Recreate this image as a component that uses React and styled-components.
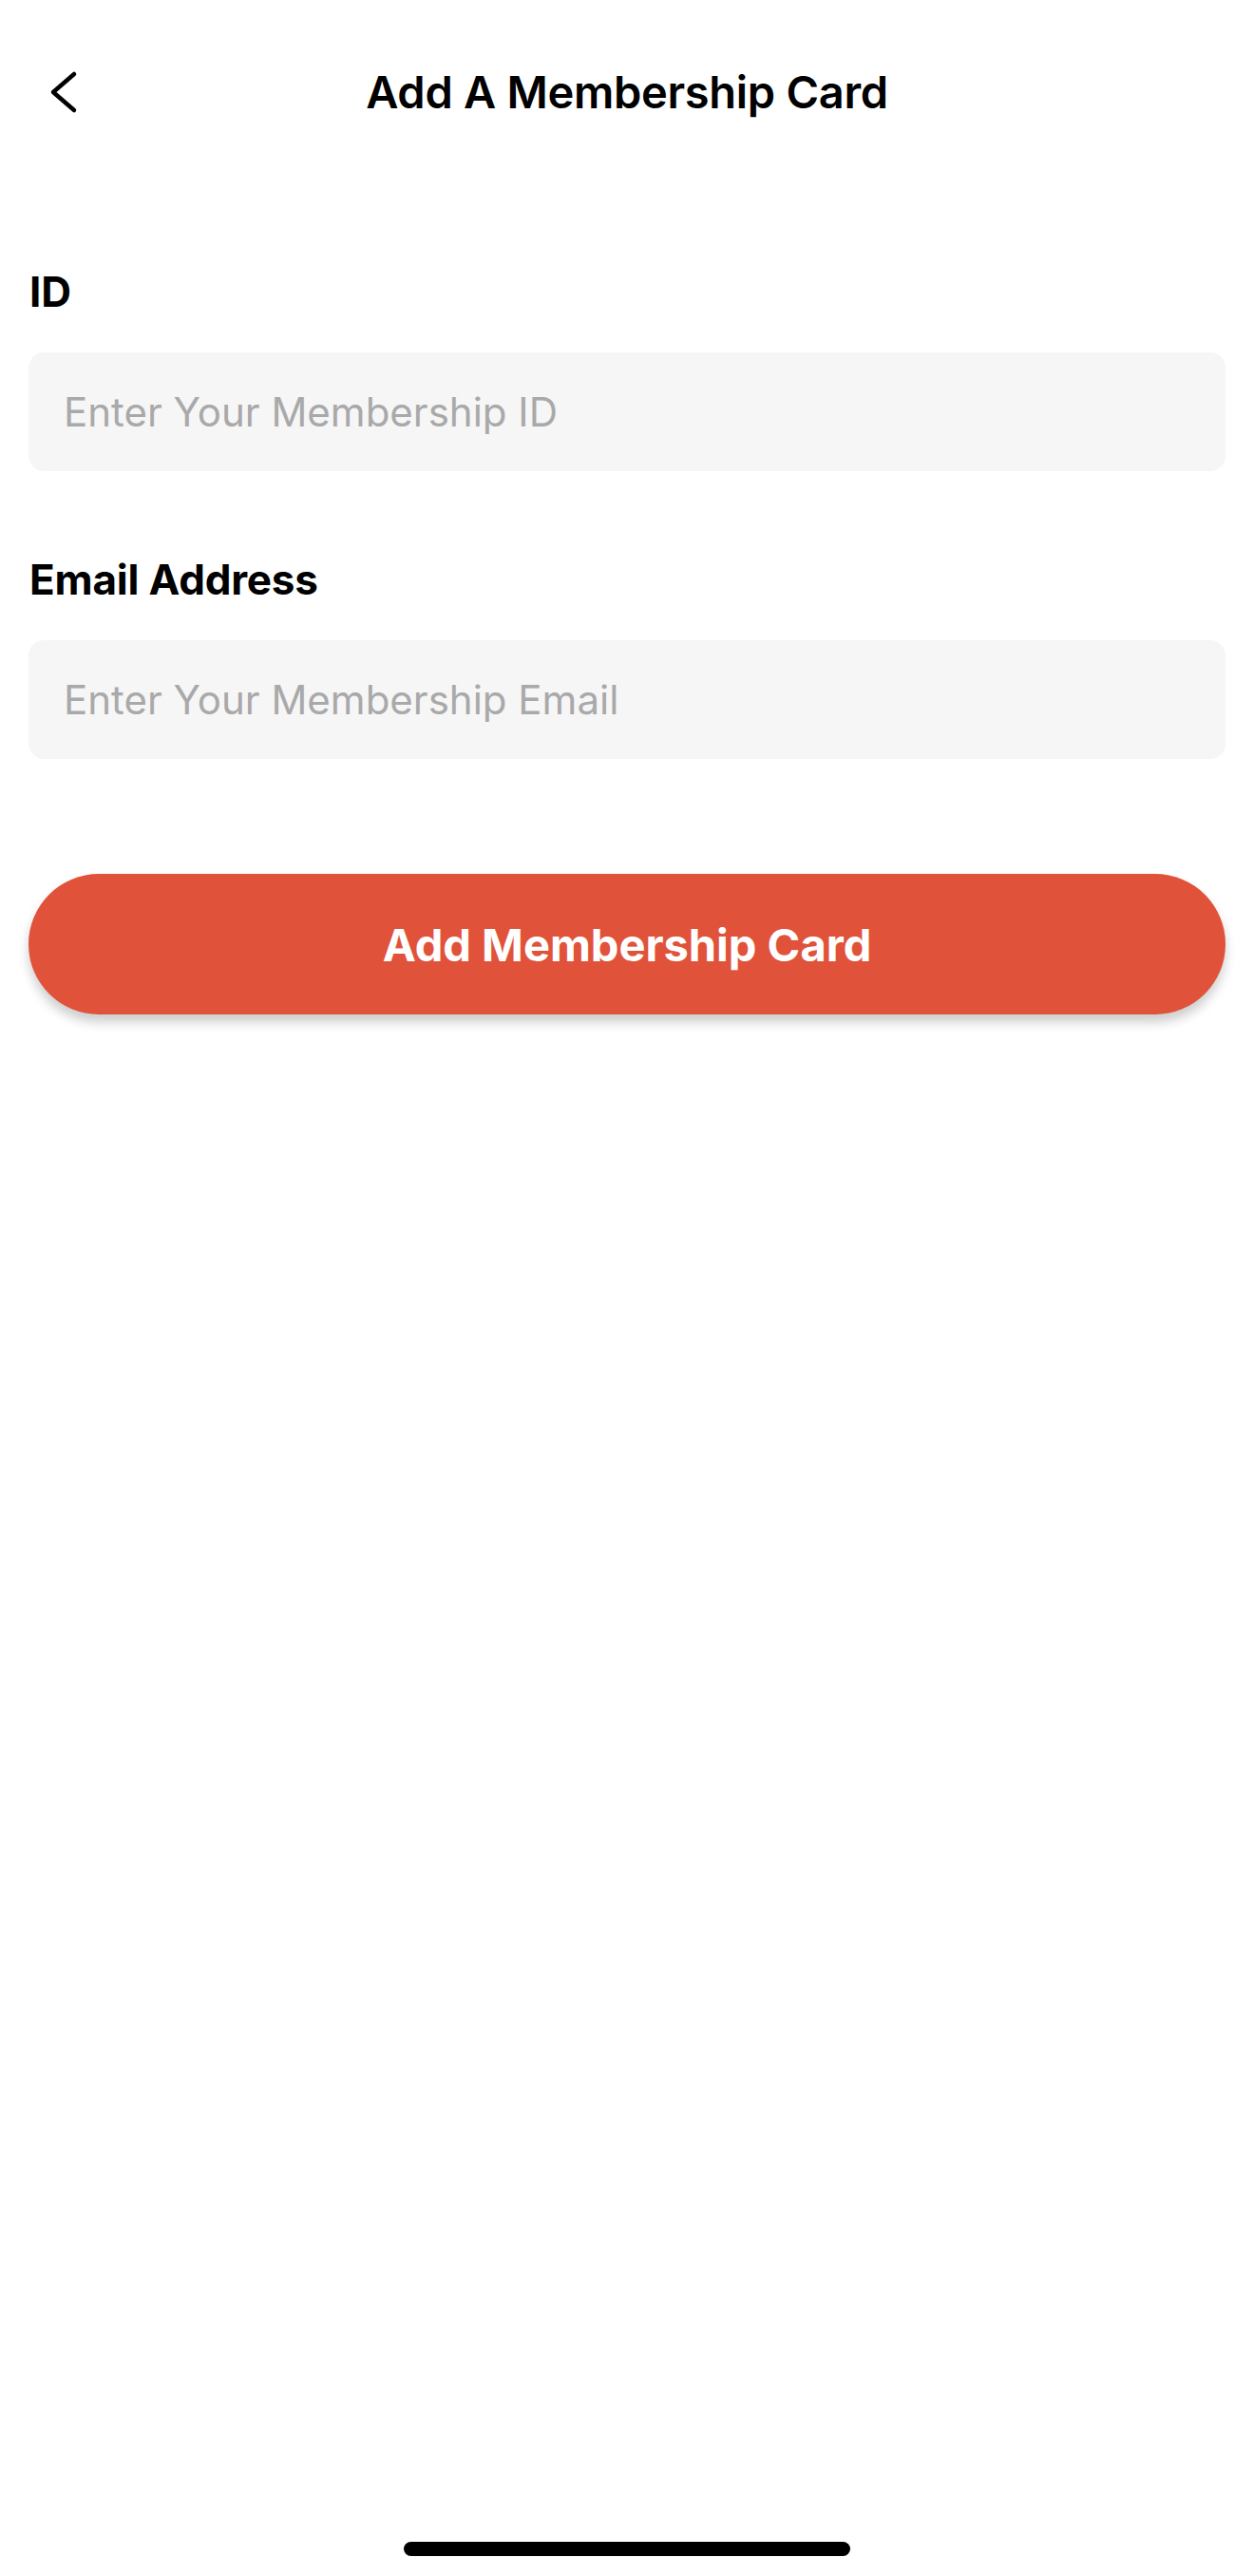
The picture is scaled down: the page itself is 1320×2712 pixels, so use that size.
import styled, { createGlobalStyle } from 'styled-components';

const GlobalStyle = createGlobalStyle`
  body {
    margin: 0;
    background: #ffffff;
    font-family: Inter, "Noto Sans", sans-serif;
    color: #000000;
  }
`;

export default function App() {
  return (
    <>
      <GlobalStyle />
      <Screen>
        <Header>
          <BackButton aria-label="Back">
            <svg width="30" height="46" viewBox="0 0 30 46" fill="none">
              <path d="M26 4L4 23L26 42" stroke="#000" strokeWidth="4.5" strokeLinecap="round" strokeLinejoin="round" />
            </svg>
          </BackButton>
          <Title>Add A Membership Card</Title>
          <span />
        </Header>

        <Form>
          <Field>
            <Label>ID</Label>
            <Input placeholder="Enter Your Membership ID" />
          </Field>
          <Field>
            <Label>Email Address</Label>
            <Input type="email" placeholder="Enter Your Membership Email" />
          </Field>
          <SubmitButton type="button">Add Membership Card</SubmitButton>
        </Form>

        <HomeIndicator />
      </Screen>
    </>
  );
}

const Screen = styled.div`
  width: 1320px;
  height: 2712px;
  display: flex;
  flex-direction: column;
  box-sizing: border-box;
`;

const Header = styled.header`
  height: 194px;
  display: grid;
  grid-template-columns: 1fr auto 1fr;
  align-items: center;
`;

const BackButton = styled.button`
  justify-self: start;
  margin-left: 52px;
  padding: 0;
  border: none;
  background: none;
  display: flex;
  cursor: pointer;
`;

const Title = styled.h1`
  margin: 0;
  font-size: 47px;
  font-weight: 600;
  letter-spacing: -0.3px;
  line-height: 56px;
`;

const Form = styled.form`
  display: flex;
  flex-direction: column;
  padding: 0 30px;
  margin-top: 87px;
`;

const Field = styled.div`
  display: flex;
  flex-direction: column;
  gap: 38px;
  margin-bottom: 88px;

  &:nth-of-type(2) {
    margin-bottom: 121px;
  }
`;

const Label = styled.label`
  font-size: 44px;
  font-weight: 700;
  line-height: 52px;
  letter-spacing: -0.2px;
  padding-left: 1px;
`;

const Input = styled.input`
  height: 125px;
  box-sizing: border-box;
  border: none;
  border-radius: 16px;
  background: #f6f6f6;
  padding: 0 37px;
  font-family: Inter, "Noto Sans", sans-serif;
  font-size: 42px;
  color: #000;
  outline: none;

  &::placeholder {
    color: #a9a9a9;
  }
`;

const SubmitButton = styled.button`
  height: 148px;
  border: none;
  border-radius: 74px;
  background: #e0533a;
  color: #ffffff;
  font-family: Inter, "Noto Sans", sans-serif;
  font-size: 47px;
  font-weight: 700;
  box-shadow: 0 8px 12px rgba(0, 0, 0, 0.2);
  cursor: pointer;
`;

const HomeIndicator = styled.div`
  margin: auto auto 21px;
  width: 470px;
  height: 15px;
  border-radius: 8px;
  background: #000000;
`;
